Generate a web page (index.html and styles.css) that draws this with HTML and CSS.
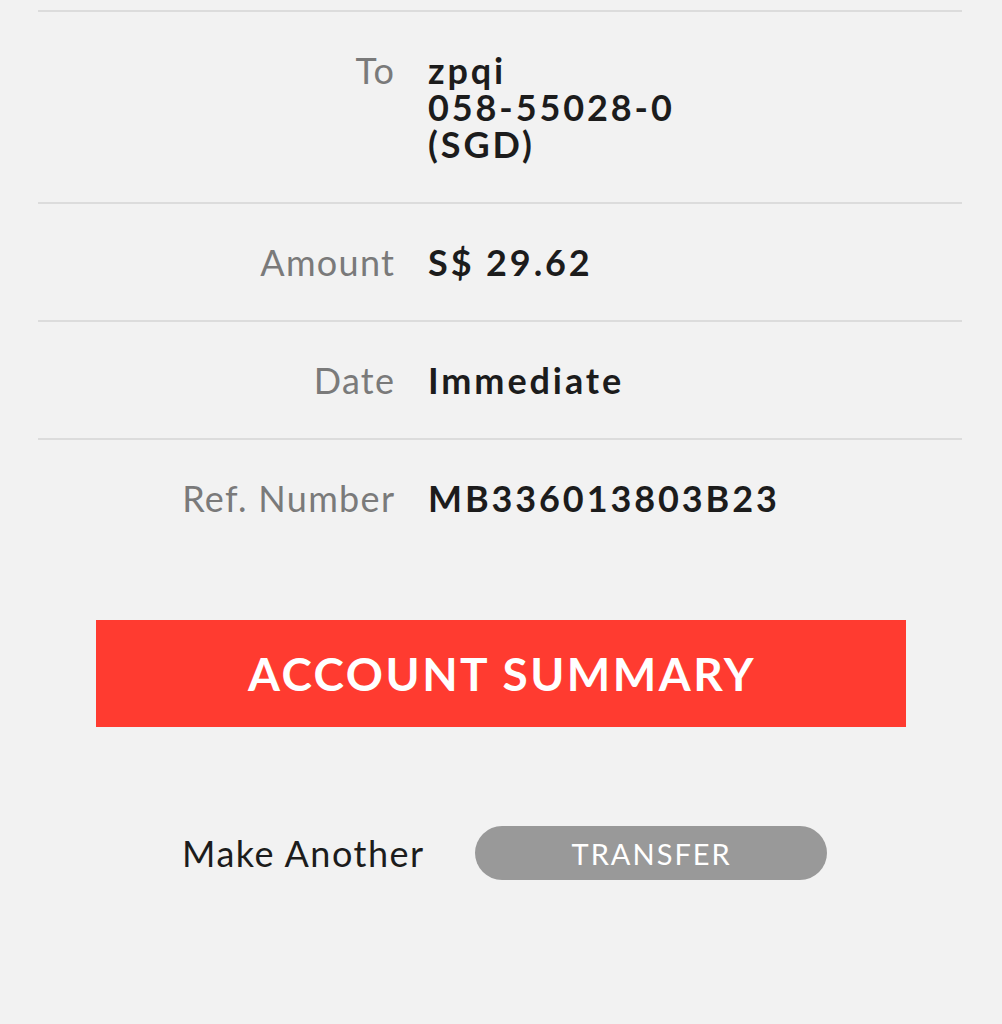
FILE: index.html
```html
<!DOCTYPE html>
<html lang="en">
<head>
    <meta charset="UTF-8">
    <meta name="viewport" content="width=device-width, initial-scale=1.0">
    <title>Transfer Complete</title>
    <link rel="stylesheet" href="styles.css">
</head>
<body>
    <div class="details">
        <div class="row">
            <div class="label">To</div>
            <div class="value">zpqi<br>058-55028-0<br>(SGD)</div>
        </div>
        <div class="row">
            <div class="label">Amount</div>
            <div class="value">S$ 29.62</div>
        </div>
        <div class="row">
            <div class="label">Date</div>
            <div class="value">Immediate</div>
        </div>
        <div class="row last">
            <div class="label">Ref. Number</div>
            <div class="value">MB336013803B23</div>
        </div>
    </div>

    <button type="button" class="summary-btn">ACCOUNT SUMMARY</button>

    <div class="another">
        <span class="another-text">Make Another</span>
        <button type="button" class="pill">TRANSFER</button>
    </div>
</body>
</html>
```

FILE: styles.css
```css
body {
    margin: 0;
    background-color: #f2f2f2;
    font-family: Lato, "Open Sans", sans-serif;
}
.details {
    margin: 0 40px 0 38px;
    padding-top: 10px;
}
.row {
    display: grid;
    grid-template-columns: 356px 1fr;
    column-gap: 34px;
    padding: 40px 0 39px;
    border-top: 2px solid #dcdcdc;
    font-size: 36px;
    line-height: 37px;
}
.row.last {
    padding-bottom: 0;
}
.label {
    text-align: right;
    color: #7a7a7a;
    letter-spacing: 1.3px;
    margin-right: -1.3px;
}
.value {
    font-weight: bold;
    color: #1c1c1c;
    letter-spacing: 2.9px;
}
.summary-btn {
    display: block;
    width: 810px;
    height: 107px;
    margin: 103px 0 0 96px;
    padding: 0 0 0 2px;
    border: none;
    background-color: #ff3b30;
    color: #ffffff;
    font-family: Lato, "Open Sans", sans-serif;
    font-weight: bold;
    font-size: 46px;
    letter-spacing: 2.5px;
    cursor: pointer;
}
.another {
    display: flex;
    align-items: center;
    gap: 50px;
    margin: 99px 0 0 182px;
}
.another-text {
    font-size: 36px;
    letter-spacing: 1.5px;
    color: #1c1c1c;
}
.pill {
    width: 352px;
    height: 54px;
    padding: 0 0 0 2px;
    border: none;
    border-radius: 27px;
    background-color: #999999;
    color: #ffffff;
    font-family: Lato, "Open Sans", sans-serif;
    font-size: 29px;
    letter-spacing: 2px;
    cursor: pointer;
}
```
